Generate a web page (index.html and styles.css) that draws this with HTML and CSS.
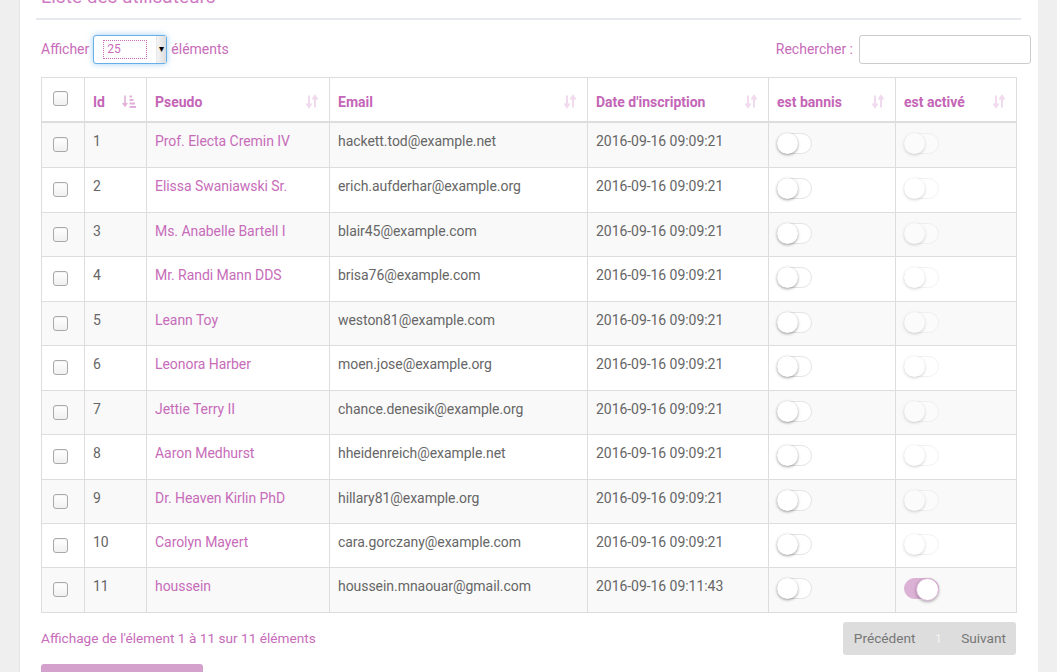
FILE: index.html
```html
<!DOCTYPE html>
<html lang="fr">
<head>
<meta charset="utf-8">
<title>Liste des utilisateurs</title>
<link rel="stylesheet" href="styles.css">
</head>
<body>
<div class="page">
  <div class="gutter"></div>
  <main class="panel">
    <h2 class="title">Liste des utilisateurs</h2>
    <div class="rule"></div>
    <div class="controls">
      <label class="length">Afficher
        <span class="select"><span class="select-val">25</span><span class="select-arrow">&#9662;</span></span>
        éléments</label>
      <label class="search">Rechercher : <span class="search-input"></span></label>
    </div>
    <table class="grid">
      <colgroup>
        <col class="c-chk"><col class="c-id"><col class="c-pseudo"><col class="c-email"><col class="c-date"><col class="c-ban"><col class="c-act">
      </colgroup>
      <thead>
        <tr>
          <th><span class="chk"></span></th>
          <th>Id <svg class="sort active" viewBox="0 0 14 14"><path d="M3 1v10M0.8 8.5L3 11.5 5.2 8.5" fill="none" stroke="currentColor" stroke-width="1.6"/><rect x="7.5" y="1" width="2.5" height="2" /><rect x="7.5" y="4.5" width="4" height="2"/><rect x="7.5" y="8" width="5.5" height="2"/><rect x="7.5" y="11.5" width="6.5" height="2"/></svg></th>
          <th>Pseudo <svg class="sort" viewBox="0 0 14 14"><path d="M4 1v11M1.5 9L4 12.5 6.5 9M10 13V2M7.5 5L10 1.5 12.5 5" fill="none" stroke="currentColor" stroke-width="2"/></svg></th>
          <th>Email <svg class="sort" viewBox="0 0 14 14"><path d="M4 1v11M1.5 9L4 12.5 6.5 9M10 13V2M7.5 5L10 1.5 12.5 5" fill="none" stroke="currentColor" stroke-width="2"/></svg></th>
          <th>Date d'inscription <svg class="sort" viewBox="0 0 14 14"><path d="M4 1v11M1.5 9L4 12.5 6.5 9M10 13V2M7.5 5L10 1.5 12.5 5" fill="none" stroke="currentColor" stroke-width="2"/></svg></th>
          <th>est bannis <svg class="sort" viewBox="0 0 14 14"><path d="M4 1v11M1.5 9L4 12.5 6.5 9M10 13V2M7.5 5L10 1.5 12.5 5" fill="none" stroke="currentColor" stroke-width="2"/></svg></th>
          <th>est activé <svg class="sort" viewBox="0 0 14 14"><path d="M4 1v11M1.5 9L4 12.5 6.5 9M10 13V2M7.5 5L10 1.5 12.5 5" fill="none" stroke="currentColor" stroke-width="2"/></svg></th>
        </tr>
      </thead>
      <tbody>
        <tr><td><span class="chk"></span></td><td>1</td><td class="name">Prof. Electa Cremin IV</td><td>hackett.tod@example.net</td><td>2016-09-16 09:09:21</td><td><span class="tgl"></span></td><td><span class="tgl off"></span></td></tr>
        <tr><td><span class="chk"></span></td><td>2</td><td class="name">Elissa Swaniawski Sr.</td><td>erich.aufderhar@example.org</td><td>2016-09-16 09:09:21</td><td><span class="tgl"></span></td><td><span class="tgl off"></span></td></tr>
        <tr><td><span class="chk"></span></td><td>3</td><td class="name">Ms. Anabelle Bartell I</td><td>blair45@example.com</td><td>2016-09-16 09:09:21</td><td><span class="tgl"></span></td><td><span class="tgl off"></span></td></tr>
        <tr><td><span class="chk"></span></td><td>4</td><td class="name">Mr. Randi Mann DDS</td><td>brisa76@example.com</td><td>2016-09-16 09:09:21</td><td><span class="tgl"></span></td><td><span class="tgl off"></span></td></tr>
        <tr><td><span class="chk"></span></td><td>5</td><td class="name">Leann Toy</td><td>weston81@example.com</td><td>2016-09-16 09:09:21</td><td><span class="tgl"></span></td><td><span class="tgl off"></span></td></tr>
        <tr><td><span class="chk"></span></td><td>6</td><td class="name">Leonora Harber</td><td>moen.jose@example.org</td><td>2016-09-16 09:09:21</td><td><span class="tgl"></span></td><td><span class="tgl off"></span></td></tr>
        <tr><td><span class="chk"></span></td><td>7</td><td class="name">Jettie Terry II</td><td>chance.denesik@example.org</td><td>2016-09-16 09:09:21</td><td><span class="tgl"></span></td><td><span class="tgl off"></span></td></tr>
        <tr><td><span class="chk"></span></td><td>8</td><td class="name">Aaron Medhurst</td><td>hheidenreich@example.net</td><td>2016-09-16 09:09:21</td><td><span class="tgl"></span></td><td><span class="tgl off"></span></td></tr>
        <tr><td><span class="chk"></span></td><td>9</td><td class="name">Dr. Heaven Kirlin PhD</td><td>hillary81@example.org</td><td>2016-09-16 09:09:21</td><td><span class="tgl"></span></td><td><span class="tgl off"></span></td></tr>
        <tr><td><span class="chk"></span></td><td>10</td><td class="name">Carolyn Mayert</td><td>cara.gorczany@example.com</td><td>2016-09-16 09:09:21</td><td><span class="tgl"></span></td><td><span class="tgl off"></span></td></tr>
        <tr><td><span class="chk"></span></td><td>11</td><td class="name">houssein</td><td>houssein.mnaouar@gmail.com</td><td>2016-09-16 09:11:43</td><td><span class="tgl"></span></td><td><span class="tgl on"></span></td></tr>
      </tbody>
    </table>
    <div class="footer">
      <div class="info">Affichage de l'élement 1 à 11 sur 11 éléments</div>
      <div class="pager"><span>Précédent</span><span class="cur">1</span><span>Suivant</span></div>
    </div>
    <div class="btn"></div>
  </main>
  <div class="gutter right"></div>
</div>
</body>
</html>
```

FILE: styles.css
```css
* { box-sizing: border-box; }
html, body { margin: 0; padding: 0; }
body {
  background: #efefef;
  font-family: Roboto, "Liberation Sans", Arial, sans-serif;
  font-size: 14px;
  color: #666;
  height: 672px;
  overflow: hidden;
}
.page { display: flex; align-items: flex-start; }
.gutter { width: 19px; flex: none; }
.panel {
  width: 1019px;
  flex: none;
  background: #fff;
  border-left: 1px solid #e6e6e6;
  padding: 0 17px 0 21px;
  margin-top: -16px;
  height: 720px;
}
.title {
  margin: 0;
  font-size: 19px;
  font-weight: 400;
  color: #d07bc4;
  line-height: 26px;
  height: 26px;
}
.rule {
  height: 2px;
  background: #e6e9ed;
  margin: 8px 0 0 -5px;
  width: 985px;
}
.controls {
  display: flex;
  justify-content: space-between;
  align-items: center;
  margin-top: 15px;
  width: 990px;
  color: #c76cb9;
}
.length, .search { display: flex; align-items: center; gap: 4px; }
.length { margin-top: -2px; }
.search { margin-top: -2px; }
.select {
  width: 74px;
  height: 29px;
  border: 1px solid #66afe9;
  border-radius: 3px;
  box-shadow: 0 0 6px rgba(102, 175, 233, .6);
  display: flex;
  align-items: center;
  justify-content: space-between;
  padding-left: 10px;
  background: #fff;
  margin-top: 2px;
}
.select-val {
  width: 42px;
  height: 17px;
  outline: 1px dotted #c76cb9;
  font-size: 12px;
  line-height: 17px;
  padding-left: 3px;
  color: #c76cb9;
}
.select-arrow {
  width: 10px;
  height: 27px;
  background: linear-gradient(to right, #f4f4f4, #ddd);
  border-left: 1px solid #e8e8e8;
  color: #000;
  font-size: 10px;
  line-height: 25px;
  text-align: center;
}
.search-input {
  width: 172px;
  height: 29px;
  border: 1px solid #ccc;
  border-radius: 3px;
  background: #fff;
  margin-left: 2px;
  margin-top: 2px;
}
.grid {
  margin-top: 13px;
  width: 975px;
  border-collapse: collapse;
  table-layout: fixed;
  border: 1px solid #ddd;
}
.c-chk { width: 43px; }
.c-id { width: 62px; }
.c-pseudo { width: 183px; }
.c-email { width: 258px; }
.c-date { width: 181px; }
.c-ban { width: 127px; }
.c-act { width: 121px; }
.grid th, .grid td {
  border: 1px solid #ddd;
  padding: 8px 8px 0;
  text-align: left;
  vertical-align: top;
  line-height: 20px;
  white-space: nowrap;
}
.grid th {
  height: 44px;
  border-bottom: 2px solid #ddd;
  color: #c465b7;
  font-weight: 700;
  position: relative;
  padding-top: 14px;
}
.grid td { height: 44.45px; letter-spacing: -0.05px; }
.grid tbody tr:first-child td { height: 46.45px; }
.grid tbody tr:nth-child(odd) td { background: #f9f9f9; }
.grid td:nth-child(2), .grid td:nth-child(4), .grid td:nth-child(5) { color: #666; }
.grid td.name { color: #c76cb9; }
.sort {
  position: absolute;
  right: 10px;
  top: 16px;
  width: 14px;
  height: 15px;
  color: #f1d9ee;
  fill: currentColor;
}
.sort.active { color: #e2b0da; }
.chk {
  display: block;
  width: 15px;
  height: 15px;
  border: 1px solid #a9a9a9;
  border-radius: 3px;
  background: linear-gradient(#fff, #f0f0f0);
  box-shadow: inset 0 1px 1px rgba(0,0,0,.05);
  margin: 6px 0 0 3px;
}
.grid th .chk { margin-top: -1px; }
.tgl {
  display: block;
  position: relative;
  width: 35px;
  height: 21px;
  border: 1px solid #e3e3e3;
  border-radius: 11px;
  background: #fff;
  margin-top: 2px;
}
.tgl::after {
  content: "";
  position: absolute;
  left: -1px;
  top: -1px;
  width: 21px;
  height: 21px;
  border-radius: 50%;
  background: #fff;
  box-shadow: 0 1px 3px rgba(0,0,0,.4);
}
.tgl.off { opacity: .45; }
.tgl.on { background: #dbb1d5; border-color: #dbb1d5; }
.tgl.on::after { left: auto; right: -1px; box-shadow: 0 1px 3px rgba(0,0,0,.3); border: 1px solid #dbb1d5; }
.footer {
  display: flex;
  justify-content: space-between;
  align-items: center;
  width: 975px;
  margin-top: 9px;
}
.info { color: #c76cb9; font-size: 13.65px; }
.pager {
  display: flex;
  align-items: center;
  gap: 19px;
  height: 33px;
  padding: 0 10px 0 11px;
  background: #ddd;
  border-radius: 3px;
  color: #777;
  font-size: 13.65px;
}
.pager .cur { color: #f1f1f1; }
.btn {
  margin-top: 9px;
  width: 162px;
  height: 30px;
  background: #d4a0cc;
  border-radius: 3px;
}
```
